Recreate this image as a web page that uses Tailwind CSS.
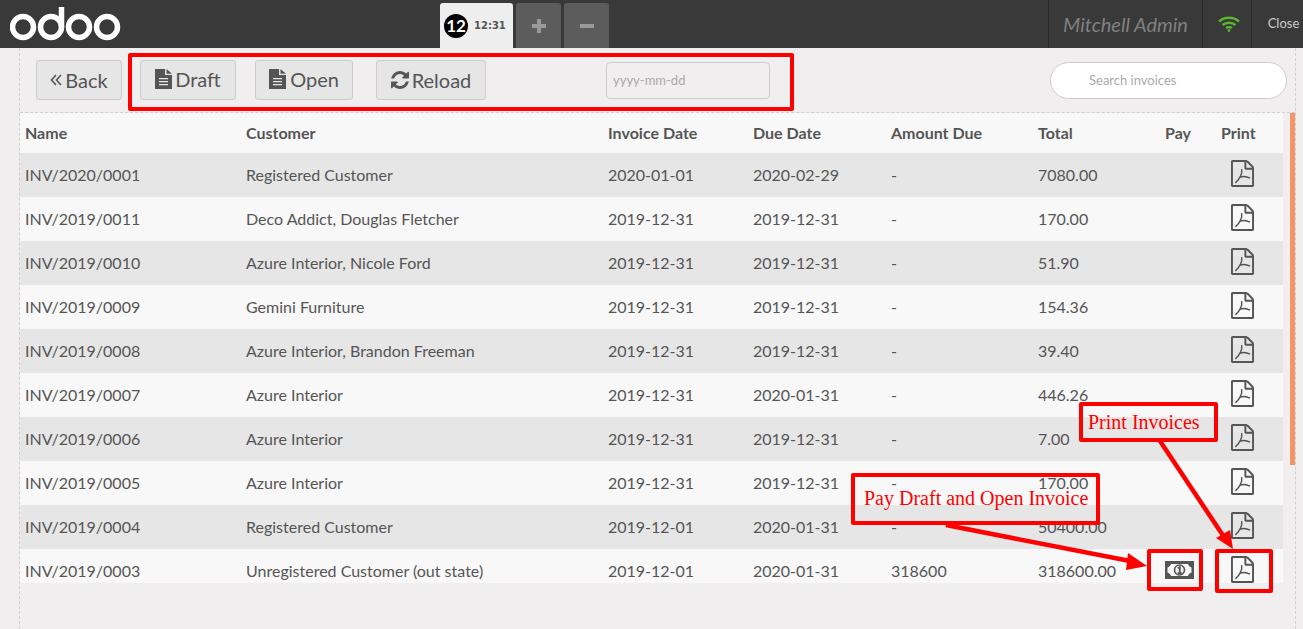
<!DOCTYPE html>
<html lang="en">
<head>
  <meta charset="UTF-8">
  <meta name="viewport" content="width=device-width, initial-scale=1.0">
  <title>Point of Sale - Invoices</title>
  <script src="https://cdn.jsdelivr.net/npm/@tailwindcss/browser@4"></script>
</head>
<body class="relative h-[629px] w-[1303px] overflow-hidden bg-[#f0eeee] font-['Lato',sans-serif] text-[#555555]">

  <!-- top bar -->
  <header class="flex h-12 bg-[#393939]">
    <div class="w-[440px] pl-[10px] pt-[5px]">
      <svg width="112" height="36" viewBox="0 0 112 36" fill="none" stroke="#ffffff" stroke-width="5.5">
        <circle cx="13" cy="22" r="10.5"/>
        <circle cx="41" cy="22" r="10.5"/>
        <path d="M51.5 2v20"/>
        <circle cx="69" cy="22" r="10.5"/>
        <circle cx="97" cy="22" r="10.5"/>
      </svg>
    </div>
    <div class="flex items-end gap-[3px]">
      <div class="flex h-[45px] w-[73px] items-center gap-[6px] rounded-t-[3px] bg-[#eeeeee] pl-[4px]">
        <span class="flex h-[24px] w-[24px] items-center justify-center rounded-full bg-black text-[17px] font-bold text-white">12</span>
        <span class="font-['DejaVu_Sans',sans-serif] text-[10px] font-bold text-[#555555]">12:31</span>
      </div>
      <div class="flex h-[45px] w-[45px] items-center justify-center rounded-t-[3px] bg-[#5c5c5c] text-[#9a9a9a]">
        <svg width="16" height="16" viewBox="0 0 16 16" fill="currentColor"><path d="M6 1h4v5h5v4h-5v5H6v-5H1V6h5z"/></svg>
      </div>
      <div class="flex h-[45px] w-[45px] items-center justify-center rounded-t-[3px] bg-[#5c5c5c] text-[#9a9a9a]">
        <svg width="16" height="16" viewBox="0 0 16 16" fill="currentColor"><path d="M1 6h14v4H1z"/></svg>
      </div>
    </div>
    <div class="ml-auto flex">
      <div class="flex w-[154px] items-center justify-center border-l border-[#2a2a2a] text-[20px] italic text-[#808080]">Mitchell Admin</div>
      <div class="flex w-[49px] items-center justify-center border-l border-[#2a2a2a] pl-[4px]">
        <svg width="22" height="16" viewBox="0 0 22 16" fill="none" stroke="#5cb531" stroke-width="2.4">
          <path d="M1 5.5c5.5-5 14.500-5 20 0"/>
          <path d="M4.500 9c3.500-3 9.500-3 13 0"/>
          <path d="M8 12c1.500-1 4.500-1 6 0"/>
          <circle cx="11" cy="14.500" r="1" fill="#5cb531" stroke-width="1"/>
        </svg>
      </div>
      <div class="flex w-[52px] items-center justify-center border-l border-[#2a2a2a] pl-[12px] text-[13px] text-[#cccccc]">Close</div>
    </div>
  </header>

  <!-- page body -->
  <main class="ml-[19px] h-[581px] w-[1277px] border-x border-dashed border-[#d0d0d0]">
    <div class="flex h-[65px] items-start border-b border-dashed border-[#d0d0d0] pt-3">
      <button class="ml-4 flex h-10 w-[86px] items-center justify-center gap-[3px] rounded-[3px] border border-[#cccccc] bg-[#e6e6e6] pb-[1px] text-[20px]">
        <svg width="12" height="14" viewBox="0 0 12 14" fill="none" stroke="#555555" stroke-width="1.6"><path d="M6 2 1.500 7 6 12M11 2 6.500 7 11 12"/></svg>
        Back
      </button>
      <button class="ml-[18px] flex h-10 w-24 items-center justify-center gap-[3px] rounded-[3px] border border-[#cccccc] bg-[#e6e6e6] pb-[2px] text-[20px]">
        <svg width="17" height="20" viewBox="0 0 17 20" fill="#555555"><path d="M0 0h10v6h7v14H0zM11.500 0 17 4.800h-5.500zM4 9v1.300h9V9zm0 3v1.300h9V12zm0 3v1.300h9V15z" fill-rule="evenodd"/></svg>
        Draft
      </button>
      <button class="ml-[19px] flex h-10 w-[98px] items-center justify-center gap-[4px] rounded-[3px] border border-[#cccccc] bg-[#e6e6e6] pb-[2px] text-[20px]">
        <svg width="17" height="20" viewBox="0 0 17 20" fill="#555555"><path d="M0 0h10v6h7v14H0zM11.500 0 17 4.800h-5.500zM4 9v1.300h9V9zm0 3v1.300h9V12zm0 3v1.300h9V15z" fill-rule="evenodd"/></svg>
        Open
      </button>
      <button class="ml-[23px] flex h-10 w-[110px] items-center justify-center gap-[3px] rounded-[3px] border border-[#cccccc] bg-[#e6e6e6] pb-[1px] text-[20px]">
        <svg width="18" height="18" viewBox="128 128 1536 1536" fill="#555555"><path d="M1639 1056q0 5-1 7-64 268-268 434.500t-478 166.500q-146 0-282.500-55t-243.500-157l-129 129q-19 19-45 19t-45-19-19-45v-448q0-26 19-45t45-19h448q26 0 45 19t19 45-19 45l-137 137q71 66 161 102t187 36q134 0 250-65t186-179q11-17 53-117 8-23 30-23h192q13 0 22.500 9.500t9.500 22.500zm25-800v448q0 26-19 45t-45 19h-448q-26 0-45-19t-19-45 19-45l138-138q-148-137-349-137-134 0-250 65t-186 179q-11 17-53 117-8 23-30 23h-199q-13 0-22.500-9.500t-9.500-22.500v-7q65-268 270-434.500t480-166.500q146 0 284 55.500t245 156.500l130-129q19-19 45-19t45 19 19 45z"/></svg>
        Reload
      </button>
      <input placeholder="yyyy-mm-dd" class="ml-[120px] mt-[2px] h-[37px] w-[164px] rounded-[4px] border border-[#cccccc] bg-[#f0eeee] pb-[1px] pl-[6px] text-[13px] placeholder:text-[#aaaaaa]">
      <input placeholder="Search invoices" class="ml-[280px] mt-[2px] h-[37px] w-[237px] rounded-full border border-[#cccccc] bg-white pb-[1px] pl-[38px] text-[13px] placeholder:text-[#aaaaaa]">
    </div>

    <div class="flex">
      <div class="h-[470px] w-[1263px] overflow-hidden">
        <table class="w-[1263px] table-fixed border-collapse text-left text-[16px]">
          <colgroup>
            <col class="w-[226px]"><col class="w-[362px]"><col class="w-[145px]"><col class="w-[138px]"><col class="w-[147px]"><col class="w-[127px]"><col class="w-[56px]"><col class="w-[62px]">
          </colgroup>
          <thead class="bg-[#f8f8f8]">
            <tr class="h-10">
              <th class="pl-[5px] font-bold">Name</th><th class="font-bold">Customer</th><th class="font-bold">Invoice Date</th><th class="font-bold">Due Date</th><th class="font-bold">Amount Due</th><th class="font-bold">Total</th><th class="font-bold">Pay</th><th class="font-bold">Print</th>
            </tr>
          </thead>
          <tbody id="rows"></tbody>
        </table>
      </div>
      <div class="ml-[7px] h-[352px] w-[5px] bg-[#f59369]"></div>
    </div>
  </main>

  <!-- screenshot annotations -->
  <div class="absolute left-[128px] top-[53px] h-[58px] w-[666px] rounded-[2px] border-4 border-[#ff0000]"></div>
  <div class="absolute left-[1079px] top-[402px] flex h-[40px] w-[139px] items-center rounded-[2px] border-4 border-[#ff0000] pl-[5px] font-['Liberation_Serif',serif] text-[20px] text-[#ff0000]">Print Invoices</div>
  <div class="absolute left-[851px] top-[473px] flex h-[52px] w-[249px] items-center rounded-[2px] border-4 border-[#ff0000] pb-[2px] pl-[9px] font-['Liberation_Serif',serif] text-[20px] text-[#ff0000]">Pay Draft and Open Invoice</div>
  <div class="absolute left-[1147px] top-[549px] h-[42px] w-[56px] rounded-[2px] border-4 border-[#ff0000]"></div>
  <div class="absolute left-[1215px] top-[549px] h-[44px] w-[58px] rounded-[2px] border-4 border-[#ff0000]"></div>
  <svg class="absolute left-0 top-0" width="1303" height="629" fill="#ff0000" stroke="none">
    <path d="M1160 441 1226 540" stroke="#ff0000" stroke-width="4.5"/>
    <path d="M1233 549 1216 538 1230 530z"/>
    <path d="M946 525 1130 561" stroke="#ff0000" stroke-width="4.5"/>
    <path d="M1147 566 1128 553 1126 570z"/>
  </svg>

  <script>
    const pdfIcon = `<svg class="mb-[3px] ml-[10px] block" width="23" height="27" viewBox="128 0 1536 1792"><path fill="#555555" d="M1596 380q28 28 48 76t20 88v1152q0 40-28 68t-68 28h-1344q-40 0-68-28t-28-68v-1600q0-40 28-68t68-28h896q40 0 88 20t76 48zm-444-244v376h376q-10-29-22-41l-313-313q-12-12-41-22zm384 1528v-1024h-416q-40 0-68-28t-28-68v-416h-768v1536h1280z"/><path fill="none" stroke="#555555" stroke-width="95" d="M840 600C900 900 700 1300 420 1520M720 1150C950 1050 1200 1100 1400 1200"/></svg>`;
    const moneyIcon = `<svg class="mb-[3px] block" width="29" height="18" viewBox="0 0 29 18"><path fill="#555555" fill-rule="evenodd" d="M0 0h29v18H0zM6 3C5.500 5 4 6 2.500 6.500v5C4 12 5.500 13 6 15h17c.5-2 2-3 3.500-3.500v-5C25 6 23.500 5 23 3z"/><circle cx="14.500" cy="9" r="5" fill="#f8f8f8" stroke="#555555" stroke-width="1.600"/><path fill="none" stroke="#555555" stroke-width="1.800" d="M12.800 7.200 14.800 6V12M12.800 12.200h4"/></svg>`;
    const invoices = [
      ["INV/2020/0001", "Registered Customer", "2020-01-01", "2020-02-29", "-", "7080.00"],
      ["INV/2019/0011", "Deco Addict, Douglas Fletcher", "2019-12-31", "2019-12-31", "-", "170.00"],
      ["INV/2019/0010", "Azure Interior, Nicole Ford", "2019-12-31", "2019-12-31", "-", "51.90"],
      ["INV/2019/0009", "Gemini Furniture", "2019-12-31", "2019-12-31", "-", "154.36"],
      ["INV/2019/0008", "Azure Interior, Brandon Freeman", "2019-12-31", "2019-12-31", "-", "39.40"],
      ["INV/2019/0007", "Azure Interior", "2019-12-31", "2020-01-31", "-", "446.26"],
      ["INV/2019/0006", "Azure Interior", "2019-12-31", "2019-12-31", "-", "7.00"],
      ["INV/2019/0005", "Azure Interior", "2019-12-31", "2019-12-31", "-", "170.00"],
      ["INV/2019/0004", "Registered Customer", "2019-12-01", "2020-01-31", "-", "50400.00"],
      ["INV/2019/0003", "Unregistered Customer (out state)", "2019-12-01", "2020-01-31", "318600", "318600.00"]
    ];
    document.getElementById("rows").innerHTML = invoices.map((r, i) => `
      <tr class="h-11 ${i % 2 ? "bg-[#f8f8f8]" : "bg-[#e6e6e6]"}">
        <td class="pl-[5px]">${r[0]}</td><td>${r[1]}</td><td>${r[2]}</td><td>${r[3]}</td><td>${r[4]}</td><td>${r[5]}</td>
        <td>${i === 9 ? moneyIcon : ""}</td><td>${pdfIcon}</td>
      </tr>`).join("");
  </script>
</body>
</html>
